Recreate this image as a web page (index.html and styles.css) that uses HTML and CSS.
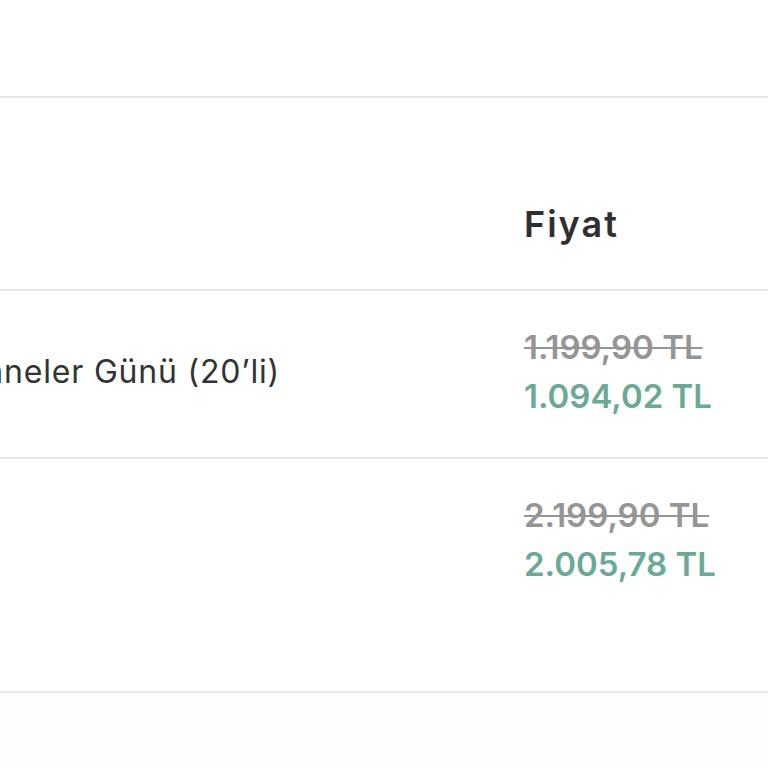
FILE: index.html
```html
<!DOCTYPE html>
<html lang="tr">
<head>
  <meta charset="UTF-8">
  <meta name="viewport" content="width=device-width, initial-scale=1.0">
  <title>Sepet</title>
  <link rel="stylesheet" href="styles.css">
</head>
<body>
  <div class="cart">
    <div class="cart-top"></div>
    <div class="cart-row cart-head">
      <div class="col-product"></div>
      <div class="col-price">Fiyat</div>
    </div>
    <div class="cart-row item">
      <div class="col-product">
        <span class="item-name">Anneler Günü (20’li)</span>
      </div>
      <div class="col-price">
        <div class="old-price">1.199,90 TL</div>
        <div class="new-price">1.094,02 TL</div>
      </div>
    </div>
    <div class="cart-row item item-tall">
      <div class="col-product"></div>
      <div class="col-price">
        <div class="old-price">2.199,90 TL</div>
        <div class="new-price">2.005,78 TL</div>
      </div>
    </div>
    <div class="cart-bottom"></div>
  </div>
</body>
</html>
```

FILE: styles.css
```css
body {
  margin: 0;
  font-family: Inter, "Noto Sans", sans-serif;
  background-color: #ffffff;
  color: #333333;
  overflow: hidden;
}

.cart {
  width: 768px;
}

.cart-top {
  height: 96px;
  border-bottom: 2px solid #e8e8e8;
}

.cart-row {
  display: flex;
  border-bottom: 2px solid #e8e8e8;
}

.col-product {
  width: 524px;
  overflow: hidden;
  display: flex;
  justify-content: flex-end;
}

.col-price {
  flex: 1;
}

.cart-head {
  height: 191px;
}

.cart-head .col-price {
  padding-top: 104px;
  font-size: 36px;
  line-height: 44px;
  font-weight: 600;
  letter-spacing: 2px;
  color: #2f2f2f;
}

.item {
  height: 166px;
}

.item-tall {
  height: 232px;
}

.item .col-product {
  align-items: center;
  height: 160px;
}

.item-name {
  white-space: nowrap;
  font-size: 32px;
  letter-spacing: 0.8px;
  color: #333333;
  margin-right: 244px;
}

.item .col-price {
  padding-top: 32px;
  font-size: 33px;
  font-weight: 600;
  line-height: 49px;
}

.old-price {
  color: #959595;
  text-decoration: line-through;
  text-decoration-thickness: 2px;
}

.new-price {
  color: #6aa996;
}

.cart-bottom {
  height: 76px;
  background-color: #fdfdfd;
}
```
